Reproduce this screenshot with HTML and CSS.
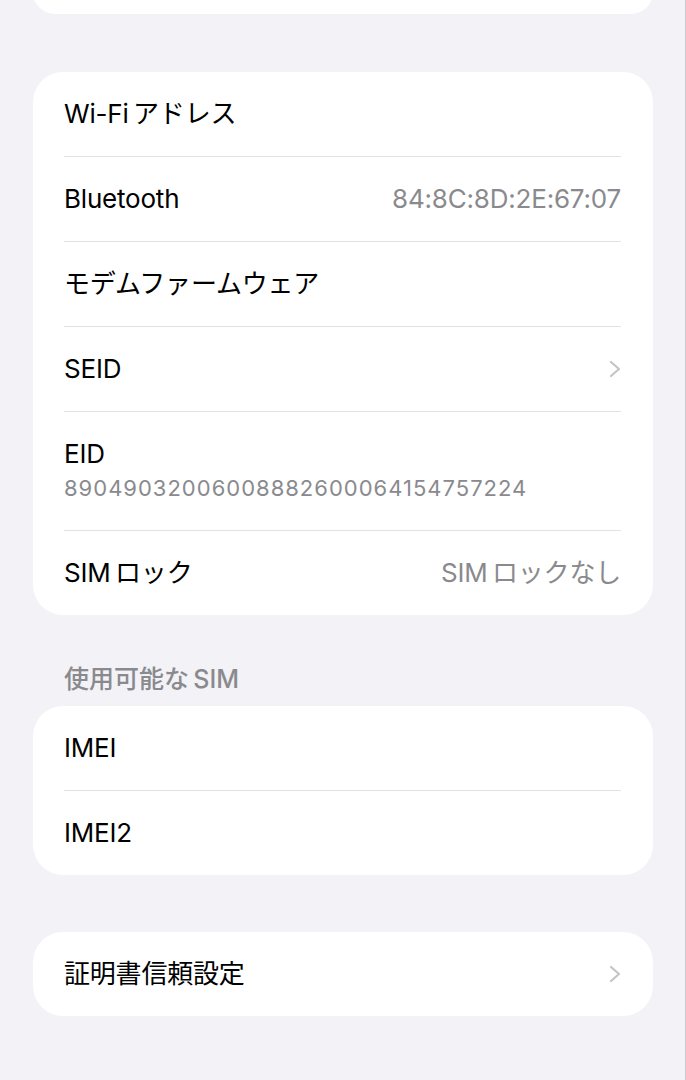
FILE: index.html
```html
<!DOCTYPE html>
<html lang="ja">
<head>
  <meta charset="UTF-8" />
  <meta name="viewport" content="width=device-width, initial-scale=1.0" />
  <title>情報</title>
  <link rel="stylesheet" href="styles.css">
</head>
<body>
  <div class="pagina">
    <div class="tarjeta tarjeta-cortada"></div>

    <div class="tarjeta">
      <div class="fila">
        <span class="etiqueta">Wi-Fi&thinsp;アドレス</span>
      </div>
      <div class="fila">
        <span class="etiqueta">Bluetooth</span>
        <span class="valor">84:8C:8D:2E:67:07</span>
      </div>
      <div class="fila">
        <span class="etiqueta">モデムファームウェア</span>
      </div>
      <div class="fila">
        <span class="etiqueta">SEID</span>
        <svg class="chevron" viewBox="0 0 12 18" width="12" height="18"><path d="M2 2l8 7-8 7" /></svg>
      </div>
      <div class="fila fila-doble">
        <span class="etiqueta">EID</span>
        <span class="valor-pequeno">89049032006008882600064154757224</span>
      </div>
      <div class="fila">
        <span class="etiqueta">SIM&thinsp;ロック</span>
        <span class="valor">SIM&thinsp;ロックなし</span>
      </div>
    </div>

    <h2 class="encabezado">使用可能な&thinsp;SIM</h2>
    <div class="tarjeta tarjeta-sim">
      <div class="fila">
        <span class="etiqueta">IMEI</span>
      </div>
      <div class="fila">
        <span class="etiqueta">IMEI2</span>
      </div>
    </div>

    <div class="tarjeta tarjeta-final">
      <div class="fila">
        <span class="etiqueta">証明書信頼設定</span>
        <svg class="chevron" viewBox="0 0 12 18" width="12" height="18"><path d="M2 2l8 7-8 7" /></svg>
      </div>
    </div>
  </div>
</body>
</html>
```

FILE: styles.css
```css
:root {
  --fondo: #f2f2f7;
  --tarjeta: #ffffff;
  --texto: #000000;
  --gris: #8a8a8e;
  --linea: #e2e2e5;
  --chevron: #c4c4c7;
}

* {
  box-sizing: border-box;
}

body {
  margin: 0;
  background: var(--fondo);
  font-family: Inter, "Noto Sans CJK JP", sans-serif;
  color: var(--texto);
  border-right: 1px solid #c9c9cc;
  min-height: 1080px;
  overflow: hidden;
}

.pagina {
  padding: 0 32px 0 33px;
}

.tarjeta {
  background: var(--tarjeta);
  border-radius: 30px;
  margin-top: 58px;
}

.tarjeta-cortada {
  height: 44px;
  margin-top: -30px;
}

.tarjeta-sim {
  margin-top: 0;
}

.tarjeta-final {
  margin-top: 57px;
}

.fila {
  display: flex;
  align-items: center;
  justify-content: space-between;
  height: 84px;
  margin: 0 32px 0 31px;
}

.fila + .fila {
  border-top: 1px solid var(--linea);
  height: 85px;
}

.fila-doble {
  flex-direction: column;
  align-items: flex-start;
  justify-content: center;
  gap: 6px;
}

.fila + .fila-doble {
  height: 119px;
  padding-bottom: 2px;
}

.etiqueta {
  font-size: 26px;
  line-height: 30px;
  letter-spacing: -0.2px;
}

.valor {
  font-size: 26px;
  line-height: 30px;
  letter-spacing: -0.2px;
  color: var(--gris);
}

.valor-pequeno {
  font-size: 22px;
  line-height: 26px;
  letter-spacing: 1px;
  color: var(--gris);
}

.chevron {
  fill: none;
  stroke: var(--chevron);
  stroke-width: 2.2;
  stroke-linecap: round;
  stroke-linejoin: round;
}

.encabezado {
  margin: 50px 0 13px 31px;
  font-size: 25px;
  line-height: 28px;
  font-weight: 500;
  color: var(--gris);
}
```
